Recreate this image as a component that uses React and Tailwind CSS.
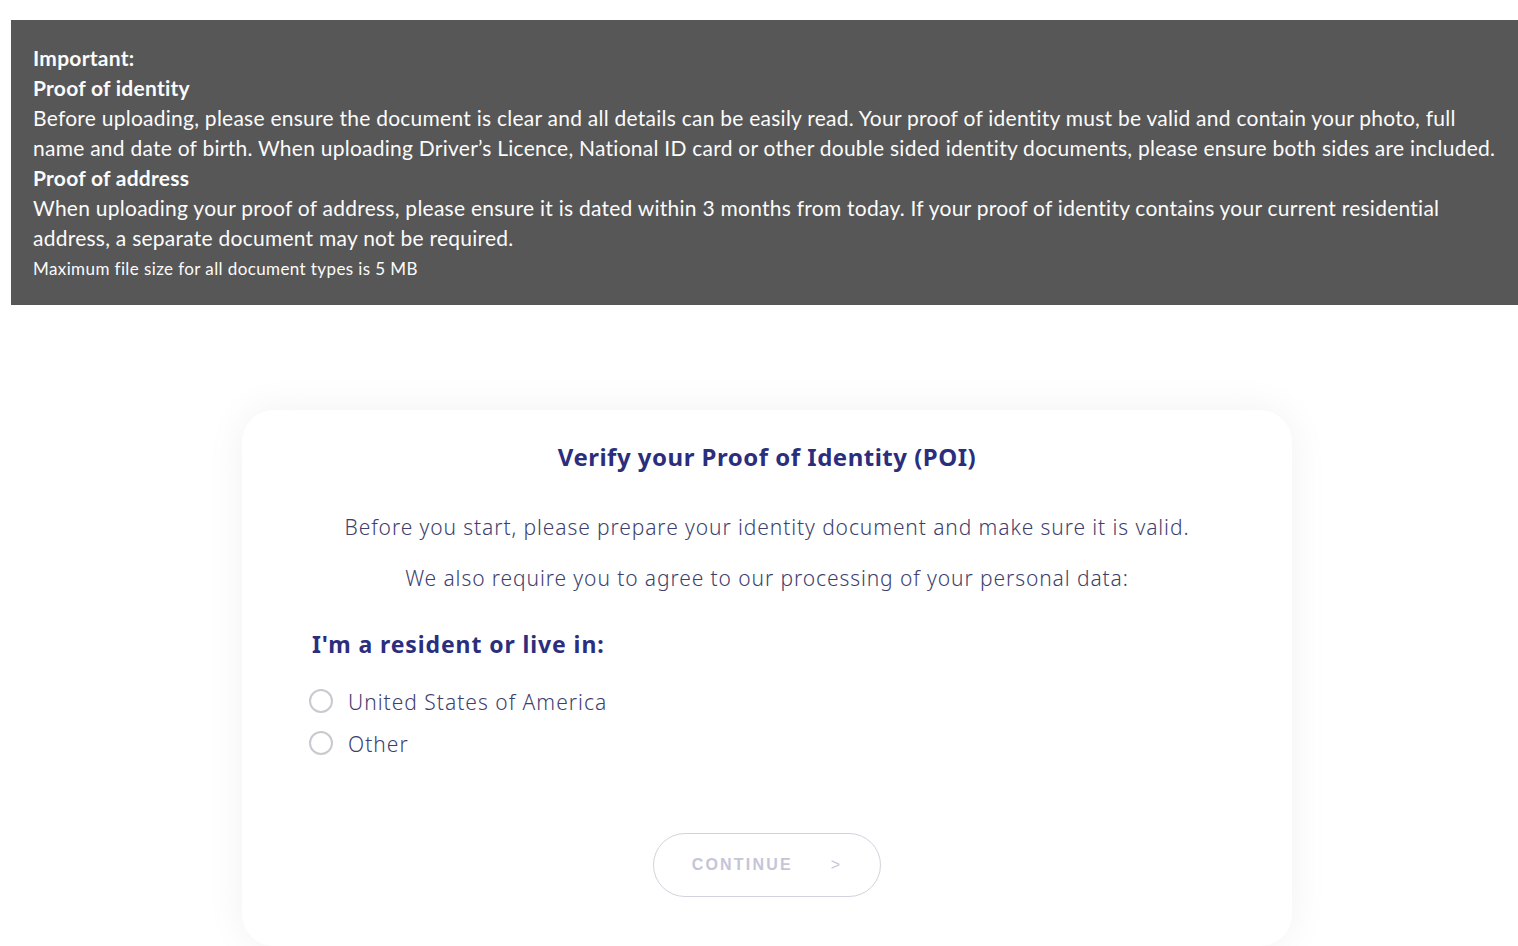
import React, { useState } from 'react';

const banner = { fontFamily: '"Lato", "Noto Sans", sans-serif' };
const card = { fontFamily: '"Noto Sans", "Open Sans", sans-serif' };

function Radio({ label, checked, onSelect }) {
  return (
    <label className="flex items-center gap-[15px] h-[42px] cursor-pointer" onClick={onSelect}>
      <span className="w-[24px] h-[24px] rounded-full border-2 border-[#c9c9cf] flex items-center justify-center">
        {checked && <span className="w-[12px] h-[12px] rounded-full bg-[#2e3180]" />}
      </span>
      <span className="text-[21px] tracking-[1px] font-light text-[#3e3f6e] pt-[3px]">{label}</span>
    </label>
  );
}

export default function App() {
  const [country, setCountry] = useState(null);

  return (
    <div className="min-h-[946px] bg-white overflow-hidden">
      <div style={banner} className="mt-[20px] ml-[11px] bg-[#575757] text-[#fbfbfb] pl-[22px] pt-[23px] pb-[24px] h-[285px] tracking-[0.25px]">
        <p className="text-[21px] leading-[30px] font-bold">Important:</p>
        <p className="text-[21px] leading-[30px] font-bold">Proof of identity</p>
        <p className="text-[21px] leading-[30px]">
          Before uploading, please ensure the document is clear and all details can be easily read. Your proof of identity must be valid and contain your photo, full
          <br />
          name and date of birth. When uploading Driver’s Licence, National ID card or other double sided identity documents, please ensure both sides are included.
        </p>
        <p className="text-[21px] leading-[30px] font-bold">Proof of address</p>
        <p className="text-[21px] leading-[30px]">
          When uploading your proof of address, please ensure it is dated within 3 months from today. If your proof of identity contains your current residential
          <br />
          address, a separate document may not be required.
        </p>
        <p className="text-[17px] leading-[24px] mt-[4px] tracking-[0.4px]">Maximum file size for all document types is 5 MB</p>
      </div>

      <div className="pt-[105px] pl-[242px]">
        <div style={card} className="w-[1050px] h-[536px] bg-white rounded-[32px] shadow-[0_0_40px_rgba(0,0,0,0.06)] px-[70px] pt-[31px]">
          <h1 className="text-center text-[24px] leading-[32px] font-bold tracking-[0.5px] text-[#2b2e7d]">
            Verify your Proof of Identity (POI)
          </h1>
          <p className="text-center text-[21px] leading-[30px] font-light tracking-[0.9px] text-[#3e3f6e] mt-[39px]">
            Before you start, please prepare your identity document and make sure it is valid.
          </p>
          <p className="text-center text-[21px] leading-[30px] font-light tracking-[0.9px] text-[#3e3f6e] mt-[21px]">
            We also require you to agree to our processing of your personal data:
          </p>
          <h2 className="text-[23px] leading-[30px] font-bold tracking-[0.9px] text-[#2b2e7d] mt-[36px]">I'm a resident or live in:</h2>
          <div className="mt-[21px] -ml-[3px]">
            <Radio label="United States of America" checked={country === 'us'} onSelect={() => setCountry('us')} />
            <Radio label="Other" checked={country === 'other'} onSelect={() => setCountry('other')} />
          </div>
          <div className="flex justify-center mt-[69px]">
            <button
              disabled={!country}
              className="w-[228px] h-[64px] rounded-full border border-[#d3d2de] flex items-center justify-center gap-[38px] text-[#c5c5d8] text-[16px] font-bold tracking-[2.2px]"
              style={{ fontFamily: '"Liberation Sans", Arial, sans-serif' }}
            >
              <span>CONTINUE</span>
              <span className="font-normal">&gt;</span>
            </button>
          </div>
        </div>
      </div>
    </div>
  );
}
